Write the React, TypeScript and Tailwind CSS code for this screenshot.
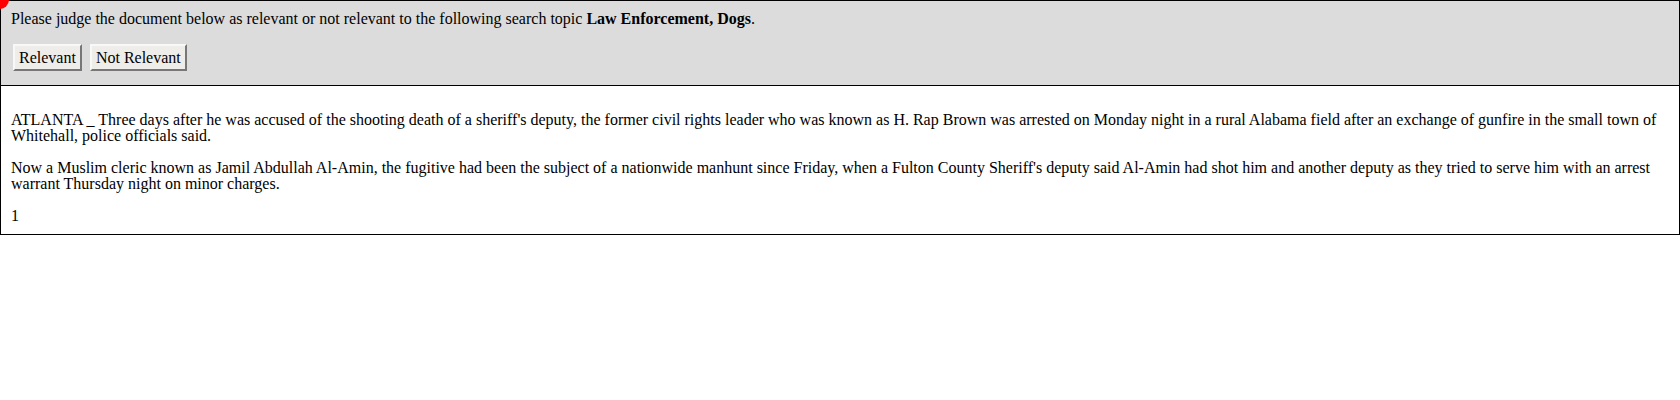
export default function App() {
    return (
        <div className="relative w-[1680px] text-[16px] leading-[16px] text-black" style={{ fontFamily: '"Liberation Serif", "Times New Roman", serif' }}>
            <div className="bg-[#dcdcdc] border border-black px-[10px] pt-[10px] pb-[14px]">
                <p>
                    Please judge the document below as relevant or not relevant to the following search topic{' '}
                    <b>Law Enforcement, Dogs</b>.
                </p>
                <div className="flex gap-[8px] mt-[17px] ml-[2px]">
                    <button className="h-[27px] px-[4px] bg-[#efedea] border-2 border-t-[#f8f8f8] border-l-[#f8f8f8] border-b-[#777] border-r-[#777]">
                        Relevant
                    </button>
                    <button className="h-[27px] px-[4px] bg-[#efedea] border-2 border-t-[#f8f8f8] border-l-[#f8f8f8] border-b-[#777] border-r-[#777]">
                        Not Relevant
                    </button>
                </div>
            </div>
            <div className="border border-t-0 border-black px-[10px] pt-[26px] pb-[10px]">
                <p>
                    ATLANTA _ Three days after he was accused of the shooting death of a sheriff's deputy, the former civil rights leader who was known as H. Rap Brown was arrested on Monday night in a rural Alabama field after an exchange of gunfire in the small town of Whitehall, police officials said.
                </p>
                <p className="mt-[16px]">
                    Now a Muslim cleric known as Jamil Abdullah Al-Amin, the fugitive had been the subject of a nationwide manhunt since Friday, when a Fulton County Sheriff's deputy said Al-Amin had shot him and another deputy as they tried to serve him with an arrest warrant Thursday night on minor charges.
                </p>
                <p className="mt-[16px]">1</p>
            </div>
            <div className="absolute -left-[10px] -top-[10px] w-[19px] h-[19px] rounded-full bg-[#ff0000]" />
        </div>
    );
}
